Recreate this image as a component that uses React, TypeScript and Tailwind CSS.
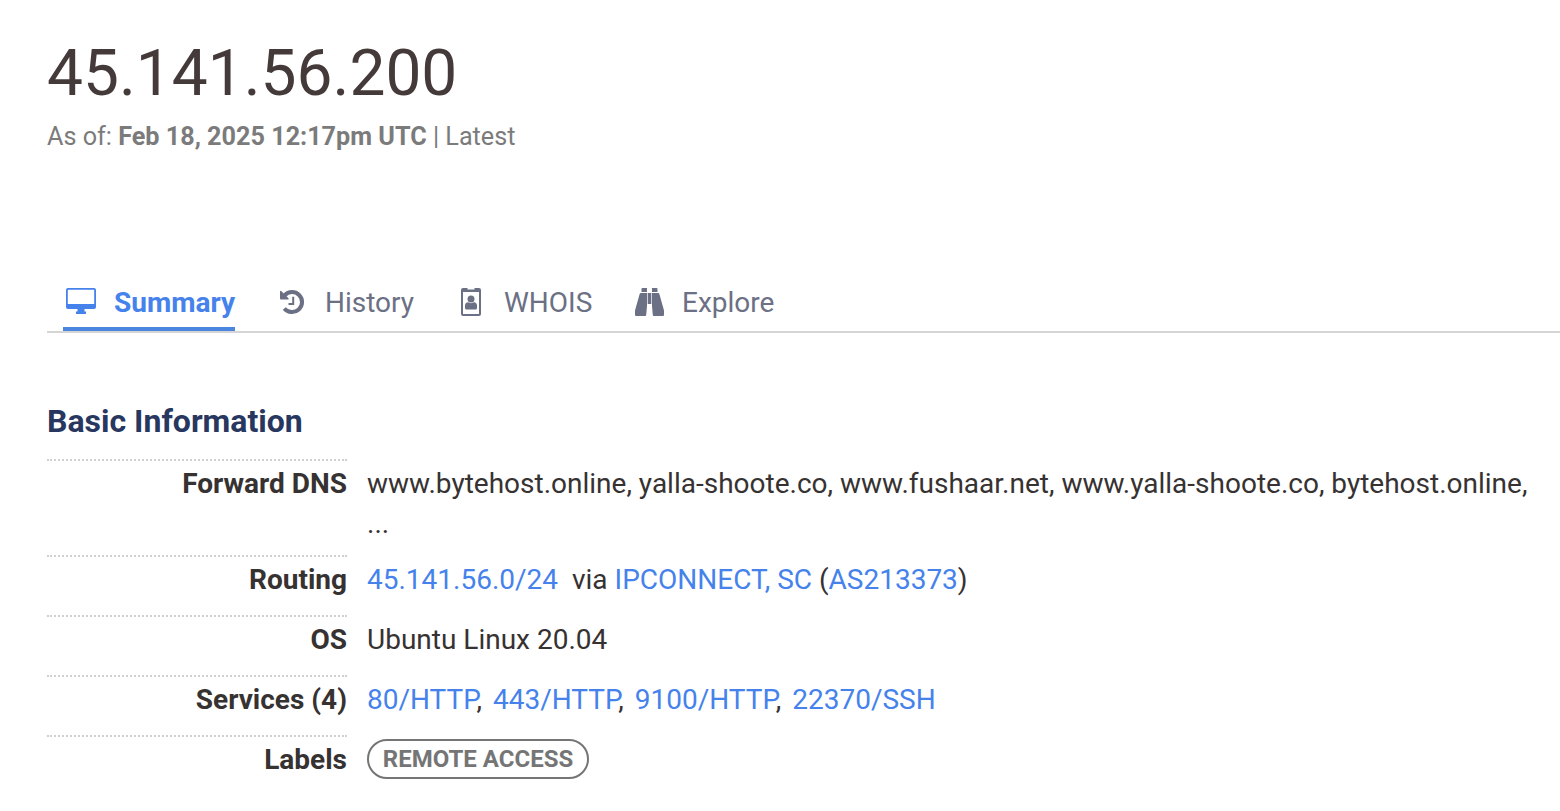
import React from 'react'

function MonitorIcon() {
  return (
    <svg className="w-[32px] h-[28px]" viewBox="0 0 32 28" fill="currentColor">
      <path fillRule="evenodd" d="M3 1h26a2 2 0 0 1 2 2v17a2 2 0 0 1-2 2H3a2 2 0 0 1-2-2V3a2 2 0 0 1 2-2zM3.4 2.8a.6.6 0 0 0-.6.6V17h26.4V3.4a.6.6 0 0 0-.6-.6z" />
      <path d="M12.5 22h7v2.5h1.5V27H11v-2.5h1.5z" />
    </svg>
  )
}

function HistoryIcon() {
  return (
    <svg className="w-[28px] h-[28px]" viewBox="0 0 28 28" fill="none" stroke="currentColor">
      <path d="M6.6 7.4A10 10 0 1 1 6.3 20.4" strokeWidth="4" />
      <path d="M2 3.6q0-1.500 1.200-.5l7.300 7.200q.8 1.200-.5 1.200H3q-1 0-1-1z" fill="currentColor" stroke="none" />
      <path d="M15.2 8.7v7.300H10.5" strokeWidth="2" />
    </svg>
  )
}

function WhoisIcon() {
  return (
    <svg className="w-[22px] h-[30px]" viewBox="0 0 22 30" fill="currentColor">
      <path fillRule="evenodd" d="M3 1h4.5v1.5h7V1H19a2 2 0 0 1 2 2v24a2 2 0 0 1-2 2H3a2 2 0 0 1-2-2V3a2 2 0 0 1 2-2zM3 5v21.4a.6.6 0 0 0 .6.6h14.8a.6.6 0 0 0 .6-.6V5z" />
      <circle cx="11" cy="12" r="3.5" />
      <path d="M5 21v-2.4c0-2 1.2-3.3 3-3.3 1.6 1.1 4.4 1.1 6 0 1.8 0 3 1.3 3 3.3V21q0 1.5-1.5 1.5h-9Q5 22.500 5 21z" />
    </svg>
  )
}

function BinocularsIcon() {
  return (
    <svg className="w-[30px] h-[28px]" viewBox="0 0 30 28" fill="currentColor">
      <path d="M8.500 0h4.500v4H7.500V1q0-1 1-1zM18 0h4.500q1 0 1 1v3H18z" />
      <path d="M6.500 5H13v13l-.8 9q-.1 1-1.100 1H2Q1 28 1 27v-4.500L5.500 6.500Q5.800 5 6.500 5zM24.500 5H18v13l.8 9q.1 1 1.100 1H29q1 0 1-1v-4.500L25.500 6.500Q25.200 5 24.500 5z" />
      <path d="M13.700 5h3.600v11h-3.600z" />
    </svg>
  )
}

function Row({ label, children, className = 'h-[60px]' }: { label: string; children: React.ReactNode; className?: string }) {
  return (
    <div className={`flex gap-5 ${className}`}>
      <dt className="w-[300px] shrink-0 border-t-2 border-dotted border-[#d0d0d0] pt-[3px] text-right font-bold">{label}</dt>
      <dd className="flex-1 pt-[5px] pr-6">{children}</dd>
    </div>
  )
}

function A({ children }: { children: React.ReactNode }) {
  return <a href="#" className="text-[#4582ec]">{children}</a>
}

export default function App() {
  return (
    <div className="h-[811px] overflow-hidden bg-white pl-[47px] font-['Roboto',sans-serif] text-[28px] leading-[40px] text-[#373232]">
      <h1 className="pt-[34px] text-[64px] leading-[80px] text-[#443a39]">45.141.56.200</h1>
      <p className="mt-[3px] text-[25.2px] leading-[40px] text-[#7b7b7b]">
        As of: <b>Feb 18, 2025 12:17pm UTC</b> | Latest
      </p>

      <nav className="mt-[118px] flex h-[58px] border-b-2 border-[#d5d5d5] pl-4 text-[#6b7084]">
        <a href="#" className="flex w-[172px] items-start border-b-4 border-[#4a86e0] pl-[2px] font-bold text-[#4582ec]">
          <span className="mt-[12px]"><MonitorIcon /></span>
          <span className="ml-[17px] mt-[8px]">Summary</span>
        </a>
        <a href="#" className="ml-[43px] flex w-[136px] items-start">
          <span className="mt-[13px]"><HistoryIcon /></span>
          <span className="ml-[19px] mt-[8px]">History</span>
        </a>
        <a href="#" className="ml-[46px] flex w-[133px] items-start">
          <span className="mt-[12px]"><WhoisIcon /></span>
          <span className="ml-[22px] mt-[8px]">WHOIS</span>
        </a>
        <a href="#" className="ml-[41px] flex items-start">
          <span className="mt-[13px]"><BinocularsIcon /></span>
          <span className="ml-[18px] mt-[8px]">Explore</span>
        </a>
      </nav>

      <h2 className="mt-[68px] text-[32px] font-bold leading-[40px] text-[#27375f]">Basic Information</h2>
      <dl className="mt-[18px]">
        <Row label="Forward DNS" className="h-[96px]">
          www.bytehost.online, yalla-shoote.co, www.fushaar.net, www.yalla-shoote.co, bytehost.online, ...
        </Row>
        <Row label="Routing">
          <A>45.141.56.0/24</A>&nbsp; via <A>IPCONNECT, SC</A> (<A>AS213373</A>)
        </Row>
        <Row label="OS">Ubuntu Linux 20.04</Row>
        <Row label="Services (4)">
          <div className="flex gap-[11px]">
            <span><A>80/HTTP</A>,</span>
            <span><A>443/HTTP</A>,</span>
            <span><A>9100/HTTP</A>,</span>
            <A>22370/SSH</A>
          </div>
        </Row>
        <Row label="Labels">
          <span className="-mt-px flex h-[40px] w-[222px] items-center justify-center rounded-full border-2 border-[#757575] text-[24px] font-bold text-[#757575]">
            REMOTE ACCESS
          </span>
        </Row>
      </dl>
    </div>
  )
}
